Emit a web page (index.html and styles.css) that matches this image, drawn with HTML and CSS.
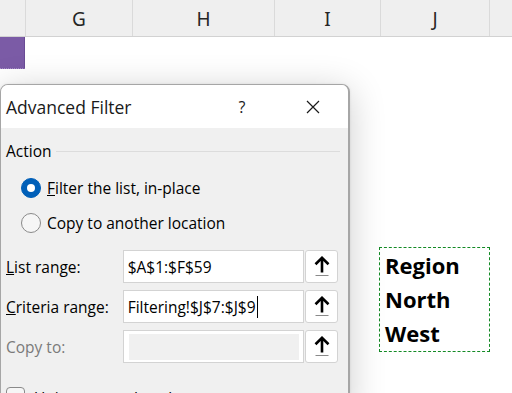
FILE: index.html
```html
<!DOCTYPE html>
<html>
<head>
<meta charset="utf-8">
<link rel="stylesheet" href="styles.css">
</head>
<body>
<div class="screen">
  <div class="colheads">
    <div class="ch"></div>
    <div class="ch">G</div>
    <div class="ch">H</div>
    <div class="ch">I</div>
    <div class="ch">J</div>
    <div class="ch last"></div>
  </div>
  <div class="sheet">
    <div class="fcell"></div>
    <div class="criteria">
      <div class="crit-line">Region</div>
      <div class="crit-line">North</div>
      <div class="crit-line">West</div>
    </div>
  </div>
  <div class="dialog">
    <div class="titlebar">
      <div class="title">Advanced Filter</div>
      <div class="tbtn help">?</div>
      <div class="tbtn close">
        <svg width="14" height="14" viewBox="0 0 14 14"><path d="M1 1L13 13M13 1L1 13" fill="none" stroke="#1a1a1a" stroke-width="1.2"/></svg>
      </div>
    </div>
    <div class="dbody">
      <div class="group-head"><span>Action</span><div class="rule"></div></div>
      <div class="radios">
        <div class="radio-row"><span class="radio on"></span><span><u>F</u>ilter the list, in-place</span></div>
        <div class="radio-row"><span class="radio"></span><span>Copy to another location</span></div>
      </div>
      <div class="fields">
        <div class="field-row">
          <div class="lbl"><span><u>L</u>ist range:</span></div>
          <div class="input">$A$1:$F$59</div>
          <div class="pick"><svg width="16" height="21" viewBox="0 0 16 21"><path d="M8 2V16.5M1.5 8.2L8 1.8L14.5 8.2" fill="none" stroke="#000" stroke-width="2.6"/><path d="M1.5 19.5H14.5" stroke="#8a8a8a" stroke-width="1"/></svg></div>
        </div>
        <div class="field-row">
          <div class="lbl"><span><u>C</u>riteria range:</span></div>
          <div class="input">Filtering!$J$7:$J$9<span class="caret"></span></div>
          <div class="pick"><svg width="16" height="21" viewBox="0 0 16 21"><path d="M8 2V16.5M1.5 8.2L8 1.8L14.5 8.2" fill="none" stroke="#000" stroke-width="2.6"/><path d="M1.5 19.5H14.5" stroke="#8a8a8a" stroke-width="1"/></svg></div>
        </div>
        <div class="field-row">
          <div class="lbl disabled"><span>Copy to:</span></div>
          <div class="input dis"><div class="fill"></div></div>
          <div class="pick"><svg width="16" height="21" viewBox="0 0 16 21"><path d="M8 2V16.5M1.5 8.2L8 1.8L14.5 8.2" fill="none" stroke="#000" stroke-width="2.6"/><path d="M1.5 19.5H14.5" stroke="#8a8a8a" stroke-width="1"/></svg></div>
        </div>
      </div>
      <div class="check-row"><span class="checkbox"></span><span>Unique records only</span></div>
    </div>
  </div>
</div>
</body>
</html>
```

FILE: styles.css
```css
* { box-sizing: border-box; margin: 0; padding: 0; }
html, body { width: 512px; height: 393px; overflow: hidden; background: #fff; }
body { font-family: "Open Sans", "Noto Sans", sans-serif; color: #000; }
.screen { position: relative; width: 512px; height: 393px; overflow: hidden; background: #fff; }

.colheads {
  display: grid;
  grid-template-columns: 26px 107px 142px 106px 109px 1fr;
  height: 37px;
  background: #efefef;
  border-bottom: 1px solid #d2d2d2;
}
.ch {
  border-right: 1px solid #dadada;
  display: flex; align-items: center; justify-content: center;
  font-family: "Noto Sans", sans-serif;
  font-size: 19px; color: #262626;
  padding-top: 1px;
}
.ch.last { border-right: none; }

.sheet {
  display: grid;
  grid-template-columns: 26px 107px 142px 106px 109px 1fr;
  grid-auto-rows: 35px;
}
.fcell {
  grid-column: 1; grid-row: 1;
  background: #7b5ba6;
  border-right: 1px solid #6a4b95;
  border-bottom: 1px dotted #a58cc8;
  margin-bottom: 3px;
  margin-right: 1px;
}
.criteria {
  grid-column: 5; grid-row: 7 / span 3;
  margin-left: -2px;
  border: 1px dashed #138a25;
  padding-left: 5px;
}
.crit-line {
  height: 34px; line-height: 34px;
  font-family: "Open Sans", sans-serif;
  font-weight: 700; font-size: 22px;
  color: #000;
}

.dialog {
  position: absolute; left: 0; top: 84px;
  width: 350px; height: 330px;
  background: #f0f0f0;
  border: 1px solid #a6a6a6;
  border-right: 2px solid #a6a6a6;
  border-radius: 8px 8px 0 0;
  box-shadow: 0 6px 36px rgba(0,0,0,0.2), 0 0 3px rgba(0,0,0,0.08);
  overflow: hidden;
}
.titlebar { height: 43px; background: #fff; display: flex; align-items: center; }
.title { flex: 1; padding-left: 5px; font-size: 17.5px; color: #1a1a1a; }
.tbtn { height: 43px; display: flex; align-items: center; justify-content: center; }
.help { width: 70px; font-size: 16px; color: #1a1a1a; }
.close { width: 71px; }

.dbody { padding: 0 10px 0 5px; font-size: 15.5px; }
.group-head { margin-top: 11px; height: 24px; display: flex; align-items: center; gap: 4px; }
.rule { flex: 1; height: 1px; background: #dcdcdc; margin-right: -2px; }
.radios { margin-top: 7px; padding-left: 15px; }
.radio-row { height: 35px; display: flex; align-items: center; gap: 6px; }
.radio {
  width: 20px; height: 20px; border-radius: 50%;
  border: 1px solid #8a8a8a; background: #f6f6f6;
  display: flex; align-items: center; justify-content: center;
}
.radio.on { background: #005fb8; border-color: #005fb8; }
.radio.on::after { content: ""; width: 8px; height: 8px; border-radius: 50%; background: #fff; }

.fields { margin-top: 10px; display: flex; flex-direction: column; gap: 7px; }
.field-row { display: flex; height: 33px; }
.lbl { width: 117px; display: flex; align-items: center; }
.lbl.disabled { color: #7a7a7a; }
.input {
  width: 182px; background: #fff; border: 1px solid #d3d3d3;
  display: flex; align-items: center; padding-left: 4px;
}
.input.dis { padding: 3px 4px 2px 5px; align-items: stretch; }
.fill { flex: 1; background: #f0f0f0; }
.caret { display: inline-block; width: 1px; height: 22px; background: #000; margin-left: 1px; }
.pick {
  width: 33px; margin-left: 1px; background: #fff;
  border: 1px solid #d3d3d3; border-radius: 3px;
  display: flex; align-items: center; justify-content: center;
}
.check-row { margin-top: 24px; display: flex; align-items: flex-start; gap: 9px; }
.checkbox { width: 19px; height: 19px; border: 1px solid #8a8a8a; border-radius: 4px; background: #f6f6f6; flex: none; }
```
